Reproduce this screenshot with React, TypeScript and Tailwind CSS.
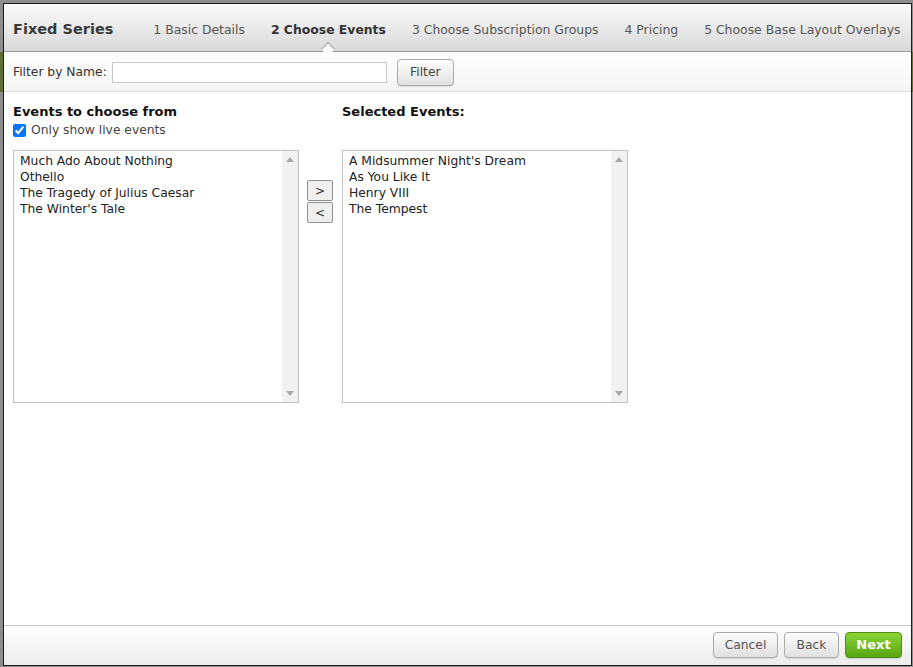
import React from "react";

const font = { fontFamily: '"DejaVu Sans", Verdana, sans-serif' };

function ListBox({ items }: { items: string[] }) {
  return (
    <div className="flex h-[253px] w-[286px] border border-[#c2c2c2] bg-white">
      <div className="flex-1 pl-[6px] pt-[2px] text-[12.3px] leading-[16px] text-[#222]">
        {items.map((t) => (
          <div key={t} className="whitespace-nowrap">{t}</div>
        ))}
      </div>
      <div className="flex w-[16px] flex-col items-center justify-between bg-[#f1f1f1] py-[6px]">
        <svg width="8" height="5" viewBox="0 0 8 5">
          <path d="M0 5 L4 0 L8 5 Z" fill="#a8a8a8" />
        </svg>
        <svg width="8" height="5" viewBox="0 0 8 5">
          <path d="M0 0 L4 5 L8 0 Z" fill="#a8a8a8" />
        </svg>
      </div>
    </div>
  );
}

export default function App() {
  const tabs = [
    "1 Basic Details",
    "2 Choose Events",
    "3 Choose Subscription Groups",
    "4 Pricing",
    "5 Choose Base Layout Overlays",
  ];
  return (
    <div className="relative h-[667px] w-[913px] overflow-hidden bg-[#8d8d8d]" style={font}>
      <div className="absolute left-0 top-[52px] h-[40px] w-full bg-[#5f6e34]" />
      <div className="relative ml-[3px] mt-[3px] flex h-[663px] w-[909px] flex-col border border-[#1c1c1c] bg-white">
        {/* header */}
        <div className="flex h-[48px] items-center border-b border-[#9a9a9a] bg-gradient-to-b from-[#fbfbfb] to-[#d9d9d9] pl-[9px] pt-[5px]">
          <div className="text-[14.5px] font-bold text-[#3a3a3a]">Fixed Series</div>
          <div className="ml-[40px] flex gap-[26px] text-[12.4px]">
            {tabs.map((t, i) => (
              <div
                key={t}
                className={
                  i === 1
                    ? "relative font-bold text-[#333]"
                    : "relative text-[#555]"
                }
              >
                {t}
                {i === 1 && (
                  <div className="absolute left-1/2 top-[23px] h-[10px] w-[10px] -translate-x-1/2 rotate-45 border-l border-t border-[#9a9a9a] bg-[#fdfdfd]" />
                )}
              </div>
            ))}
          </div>
        </div>
        {/* filter bar */}
        <div className="flex h-[40px] items-center border-b border-[#dcdcdc] bg-gradient-to-b from-[#ffffff] to-[#f4f4f4] pl-[9px] pt-[1px] text-[12.3px] text-[#333]">
          <span>Filter by Name:</span>
          <input
            type="text"
            className="ml-[5px] h-[21px] w-[275px] border border-[#c8c8c8] bg-white outline-none"
          />
          <button className="ml-[10px] h-[27px] w-[57px] rounded-[4px] border border-[#a9a9a9] bg-gradient-to-b from-[#fdfdfd] to-[#e2e2e2] text-[12.3px] text-[#444] shadow-[0_1px_1px_rgba(0,0,0,0.1)]">
            Filter
          </button>
        </div>
        {/* content */}
        <div className="flex flex-1 pl-[9px]">
          <div className="w-[286px]">
            <div className="h-[58px] pt-[12px]">
              <div className="text-[13px] font-bold leading-[16px] text-[#111]">Events to choose from</div>
              <label className="mt-[2px] flex items-center gap-[5px] text-[12.3px] leading-[16px] text-[#444]">
                <input type="checkbox" defaultChecked className="m-0 h-[13px] w-[13px]" />
                Only show live events
              </label>
            </div>
            <ListBox
              items={[
                "Much Ado About Nothing",
                "Othello",
                "The Tragedy of Julius Caesar",
                "The Winter's Tale",
              ]}
            />
          </div>
          <div className="ml-[8px] flex w-[26px] flex-col gap-[1px] pt-[88px]">
            <button className="h-[21px] w-[26px] rounded-[2px] border border-[#8f8f8f] bg-[#efefef] text-[12px] text-[#333]">
              &gt;
            </button>
            <button className="h-[21px] w-[26px] rounded-[2px] border border-[#8f8f8f] bg-[#efefef] text-[12px] text-[#333]">
              &lt;
            </button>
          </div>
          <div className="ml-[9px] w-[286px]">
            <div className="h-[58px] pt-[12px]">
              <div className="text-[13px] font-bold leading-[16px] text-[#111]">Selected Events:</div>
            </div>
            <ListBox
              items={[
                "A Midsummer Night's Dream",
                "As You Like It",
                "Henry VIII",
                "The Tempest",
              ]}
            />
          </div>
        </div>
        {/* footer */}
        <div className="flex h-[40px] items-center justify-end gap-[6px] border-t border-[#c8c8c8] bg-gradient-to-b from-[#ffffff] to-[#ebebeb] pr-[9px]">
          <button className="mb-[1px] h-[26px] w-[65px] rounded-[4px] border border-[#ababab] bg-gradient-to-b from-[#fdfdfd] to-[#e0e0e0] text-[12.3px] text-[#555] shadow-[0_1px_1px_rgba(0,0,0,0.1)]">
            Cancel
          </button>
          <button className="mb-[1px] h-[26px] w-[55px] rounded-[4px] border border-[#ababab] bg-gradient-to-b from-[#fdfdfd] to-[#e0e0e0] text-[12.3px] text-[#555] shadow-[0_1px_1px_rgba(0,0,0,0.1)]">
            Back
          </button>
          <button className="mb-[1px] h-[26px] w-[57px] rounded-[4px] border border-[#4e8d12] bg-gradient-to-b from-[#8bd435] to-[#56a611] text-[13px] font-bold text-white shadow-[0_1px_1px_rgba(0,0,0,0.15)]">
            Next
          </button>
        </div>
      </div>
    </div>
  );
}
